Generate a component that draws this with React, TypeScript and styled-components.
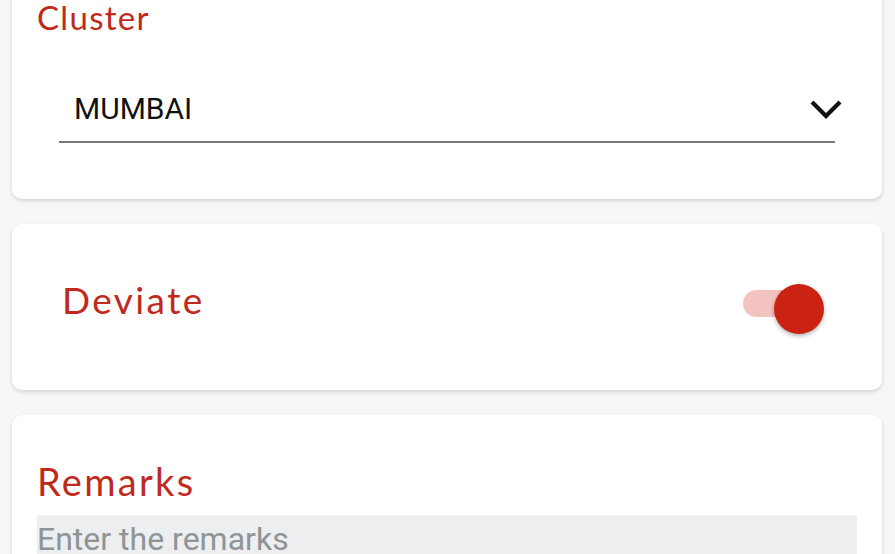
import styled, { createGlobalStyle } from "styled-components";

const GlobalStyle = createGlobalStyle`
  html, body {
    margin: 0;
    padding: 0;
    background: #f7f7f7;
    overflow: hidden;
  }
`;

export default function App() {
  return (
    <>
      <GlobalStyle />
      <SPage>
        <SCard $height={210}>
          <SLabel $size={33} $spacing={1.3} $top={9}>
            Cluster
          </SLabel>
          <SSelect>
            <SSelectValue>MUMBAI</SSelectValue>
            <SChevron viewBox="0 0 34 24">
              <path d="M3 5 L17 19 L31 5" fill="none" stroke="#111" strokeWidth="4.2" />
            </SChevron>
          </SSelect>
        </SCard>
        <SToggleCard>
          <SLabel $size={37} $spacing={2.4} $top={0}>
            Deviate
          </SLabel>
          <SSwitch>
            <STrack />
            <SThumb />
          </SSwitch>
        </SToggleCard>
        <SCard $height={180}>
          <SLabel $size={38} $spacing={2.3} $top={44}>
            Remarks
          </SLabel>
          <SInput placeholder="Enter the remarks" />
        </SCard>
      </SPage>
    </>
  );
}

const SPage = styled.div`
  display: flex;
  flex-direction: column;
  gap: 25px;
  padding: 0 13px 0 12px;
  margin-top: -11px;
`;

const SCard = styled.div<{ $height: number }>`
  box-sizing: border-box;
  height: ${(p) => p.$height}px;
  background: #fff;
  border-radius: 10px;
  box-shadow: 0 2px 4px rgba(0, 0, 0, 0.14);
  padding: 0 25px;
  display: flex;
  flex-direction: column;
`;

const SToggleCard = styled(SCard).attrs({ $height: 166 })`
  flex-direction: row;
  align-items: center;
  justify-content: space-between;
  padding: 0 58px 14px 50px;
`;

const SLabel = styled.div<{ $size: number; $spacing: number; $top: number }>`
  margin-top: ${(p) => p.$top}px;
  font-family: Lato, "Liberation Sans", sans-serif;
  font-size: ${(p) => p.$size}px;
  line-height: 1.2;
  letter-spacing: ${(p) => p.$spacing}px;
  color: #c0291c;
`;

const SSelect = styled.div`
  margin: 54px 22px 0 22px;
  height: 49px;
  border-bottom: 2px solid #777;
  display: flex;
  align-items: flex-start;
  justify-content: space-between;
  padding-left: 15px;
`;

const SSelectValue = styled.span`
  font-family: Roboto, "Liberation Sans", sans-serif;
  font-size: 30px;
  color: #111;
  line-height: 1;
  margin-top: 2px;
`;

const SChevron = styled.svg`
  width: 34px;
  height: 24px;
  margin-right: -8px;
  margin-top: 5px;
`;

const SSwitch = styled.div`
  position: relative;
  width: 81px;
  height: 50px;
  margin-top: 18px;
  display: flex;
  align-items: flex-start;
`;

const STrack = styled.div`
  width: 72px;
  height: 27px;
  margin-top: 6px;
  border-radius: 14px;
  background: #f2c3bf;
`;

const SThumb = styled.div`
  position: absolute;
  right: 0;
  top: 0;
  width: 50px;
  height: 50px;
  border-radius: 50%;
  background: #cc2213;
  box-shadow: 0 2px 4px rgba(0, 0, 0, 0.3);
`;

const SInput = styled.input`
  margin-top: 10px;
  height: 60px;
  box-sizing: border-box;
  border: none;
  outline: none;
  background: #eceeef;
  padding: 0 0 12px 0;
  font-family: Roboto, "Liberation Sans", sans-serif;
  font-size: 32px;
  color: #333;
  &::placeholder {
    color: #8f9496;
  }
`;
